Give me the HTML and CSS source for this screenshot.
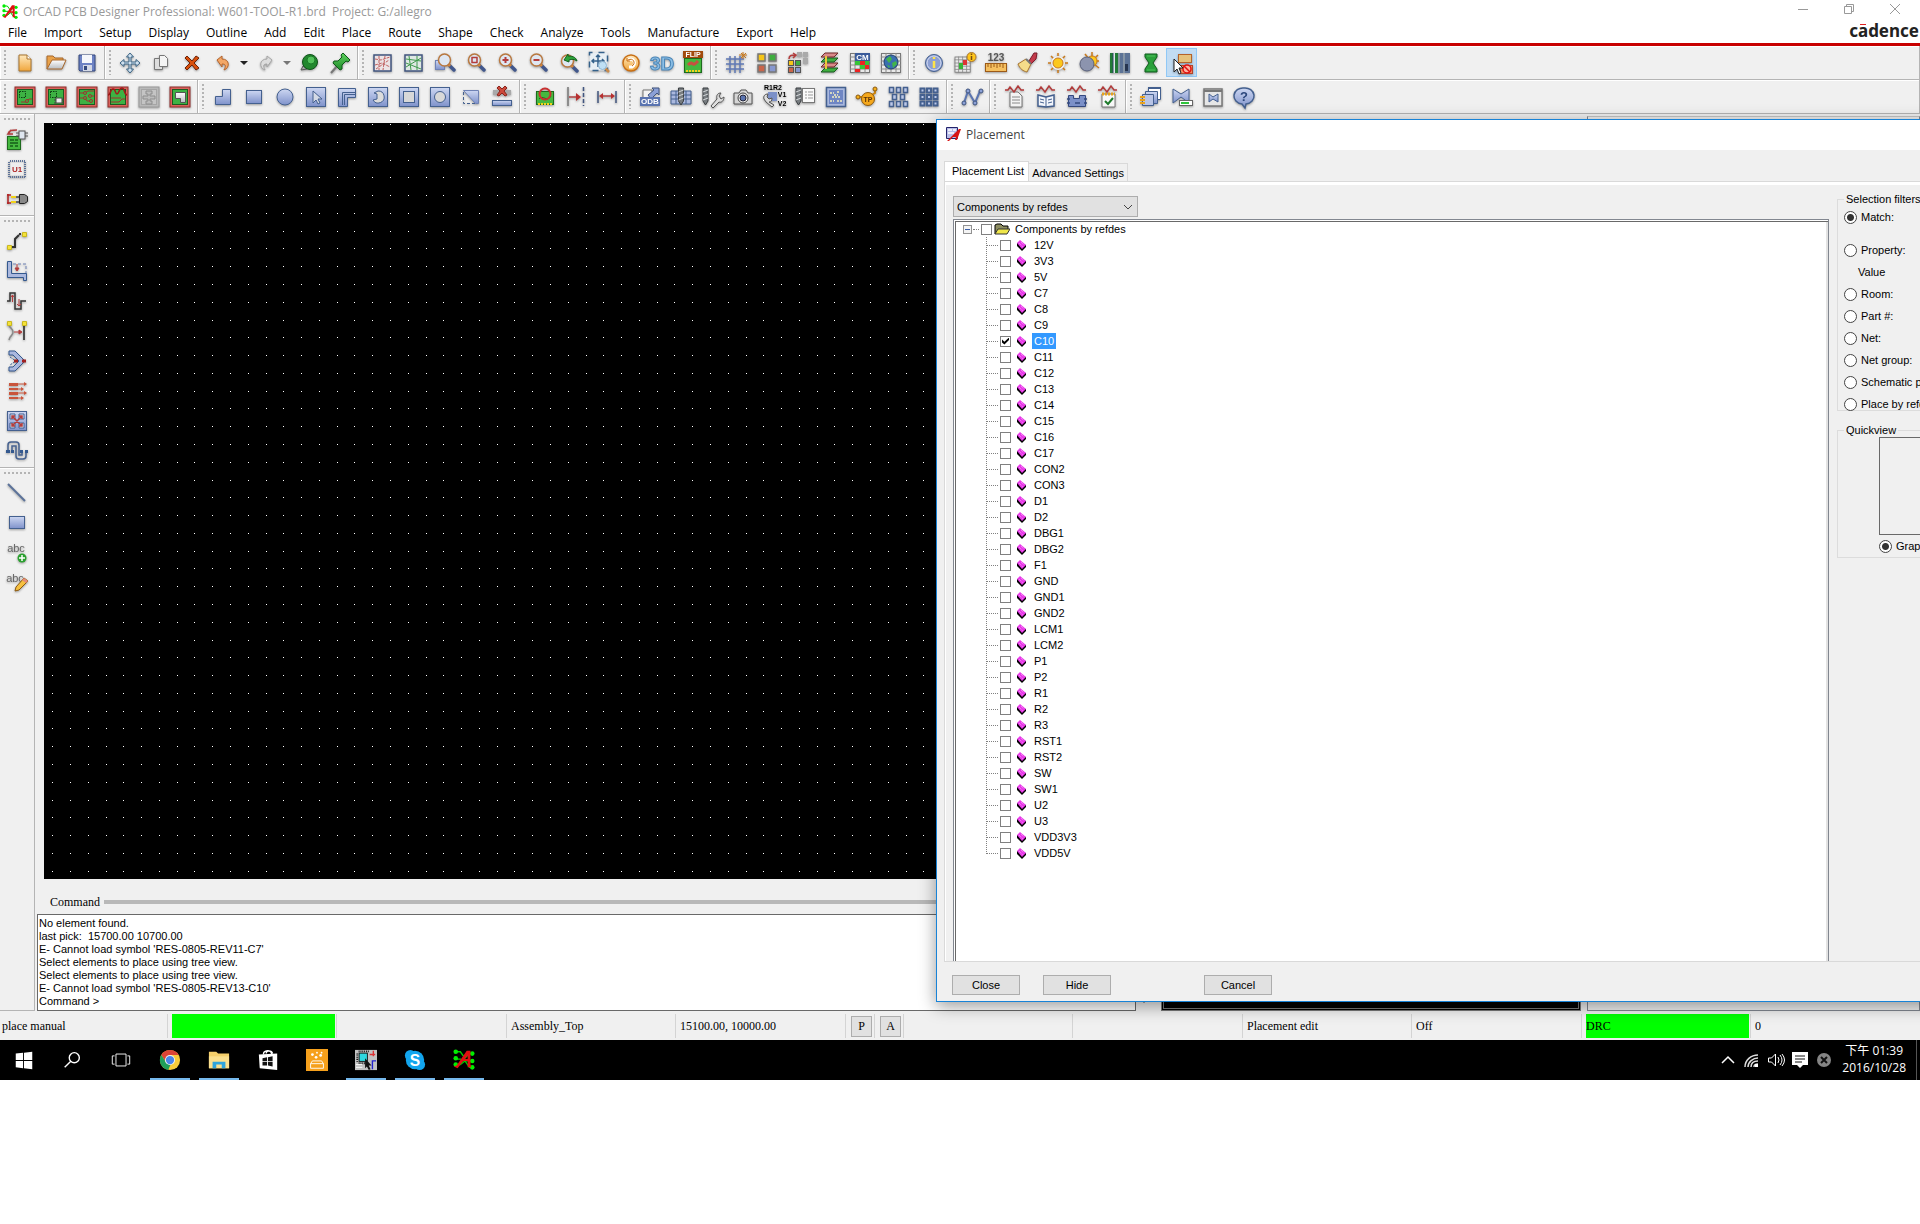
FILE: index.html
```html
<!DOCTYPE html>
<html lang="en">
<head>
    <meta charset="UTF-8">
    <meta name="viewport" content="width=device-width, initial-scale=1.0">
    <title>OrCAD PCB Designer Professional</title>
    <link rel="stylesheet" href="styles.css">
</head>
<body>
<!-- Shared gradients and symbols -->
<svg class="defs" aria-hidden="true">
    <defs>
        <linearGradient id="blue" x1="0" y1="0" x2="0" y2="1"><stop offset="0" stop-color="#cdd7f2"/><stop offset="1" stop-color="#7f92cb"/></linearGradient>
        <linearGradient id="orange" x1="0" y1="0" x2="0" y2="1"><stop offset="0" stop-color="#ffe9bd"/><stop offset="1" stop-color="#f0a63c"/></linearGradient>
        <linearGradient id="green" x1="0" y1="0" x2="0" y2="1"><stop offset="0" stop-color="#5fd35f"/><stop offset="1" stop-color="#1f8a2a"/></linearGradient>
        <linearGradient id="grey" x1="0" y1="0" x2="0" y2="1"><stop offset="0" stop-color="#ffffff"/><stop offset="1" stop-color="#b9bcc0"/></linearGradient>
    </defs>
    <symbol id="board" viewBox="0 0 24 24"><rect x="2" y="2" width="20" height="20" fill="#d9625c" stroke="#8f2d2a"/><rect x="4.500" y="4.500" width="15" height="15" fill="#3db243" stroke="#1c5a20"/></symbol>
    <symbol id="square" viewBox="0 0 24 24"><rect x="2.500" y="2.500" width="19" height="19" fill="url(#blue)" stroke="#44608f"/></symbol>
    <symbol id="lens" viewBox="0 0 24 24"><path d="M15 14l5 5" stroke="#41578c" stroke-width="3.500" stroke-linecap="round"/><path d="M14 13l2 2" stroke="#d98a3a" stroke-width="3"/><circle cx="10.500" cy="9" r="6" fill="#dfe7f2" stroke="#b9783f" stroke-width="1.500"/></symbol>
    <symbol id="wave" viewBox="0 0 24 24"><path d="M2 6h3l2-3 4 5 4-6 3 4h3" fill="none" stroke="#b13a3a" stroke-width="1.500"/></symbol>
    <symbol id="drill" viewBox="0 0 24 24"><path d="M4 2h5v13l-2.500 4L4 15z" fill="#777c80" stroke="#3b3f42"/><path d="M4 6l5-2M4 10l5-2M4 14l5-2" stroke="#d5d8da"/></symbol>
    <symbol id="table" viewBox="0 0 24 24"><rect x="2.500" y="2.500" width="19" height="19" fill="#e8e8e8" stroke="#777"/><path d="M2 6h20M2 10h20M2 14h20M2 18h20M7 2v20M12 2v20M17 2v20" stroke="#888"/></symbol>
    <symbol id="allegro" viewBox="0 0 24 24"><g fill="none" stroke="#0c0" stroke-width="1.500"><path d="M3 3h5l5 7 5-5h4M3 11h6M3 17h5l5-4 5 7h4M14 13h8"/></g><g fill="#0e0"><circle cx="3" cy="3" r="2.500"/><circle cx="3" cy="10" r="2.500"/><circle cx="3" cy="17" r="2.500"/><circle cx="21" cy="5" r="2.500"/><circle cx="21" cy="13" r="2.500"/><circle cx="21" cy="20" r="2.500"/></g><path d="M1 19l4 2L16 7v4h-5v2h5v7h4l-1-3V2h-4L4 18z" fill="#e01010"/></symbol>
    <symbol id="chip" viewBox="0 0 12 12"><path d="M1 4v3l5 5 4-4V6z" fill="#000"/><path d="M1 4l3-3 6 5-4 4z" fill="#e838e8"/><path d="M3 4l4 4M5 3l3 3" stroke="#f8a0f8" stroke-dasharray="1 1"/></symbol>
</svg>

<div class="desktop">
    <header>
        <div class="titlebar">
            <svg class="app-icon" viewBox="0 0 24 24"><use href="#allegro"/></svg>
            <h1>OrCAD PCB Designer Professional: W601-TOOL-R1.brd&nbsp; Project: G:/allegro</h1>
            <div class="window-controls">
                <button aria-label="Minimize"><svg viewBox="0 0 12 12"><path d="M1 6.500h10"/></svg></button>
                <button aria-label="Restore"><svg viewBox="0 0 12 12"><path d="M1.500 3.500h7v7h-7zM3.500 3V1.500h7v7H9"/></svg></button>
                <button aria-label="Close window"><svg viewBox="0 0 12 12"><path d="M1 1l10 10M11 1L1 11"/></svg></button>
            </div>
        </div>
        <div class="menu-row">
            <nav>
                <button>File</button><button>Import</button><button>Setup</button><button>Display</button><button>Outline</button><button>Add</button><button>Edit</button><button>Place</button><button>Route</button><button>Shape</button><button>Check</button><button>Analyze</button><button>Tools</button><button>Manufacture</button><button>Export</button><button>Help</button>
            </nav>
            <div class="brand">c<span class="macron">a</span>dence</div>
        </div>
    </header>

    <!-- Main toolbars -->
    <div class="toolbar">
        <div class="group">
            <button aria-label="New"><svg viewBox="0 0 24 24"><path d="M6 4h8l4 4v12H6z" fill="url(#orange)" stroke="#a8742f"/><path d="M14 4v4h4" fill="#fff" stroke="#a8742f"/></svg></button>
            <button aria-label="Open"><svg viewBox="0 0 24 24"><path d="M3 18V5h6l2 2h8v3" fill="#e9a24a" stroke="#a8682c"/><path d="M3 18L8 9h14l-4 9z" fill="url(#grey)" stroke="#a8682c"/></svg></button>
            <button aria-label="Save"><svg viewBox="0 0 24 24"><path d="M4 4h16v16H5l-1-1z" fill="#6d82c4" stroke="#34497f"/><path d="M7 4h10v8H7z" fill="#f4f6fb"/><path d="M8 14h9v6H8z" fill="#d4d9e6"/><path d="M9 15h3v4H9z" fill="#34497f"/></svg></button>
        </div>
        <div class="group">
            <button aria-label="Move"><svg viewBox="0 0 24 24"><path d="M12 2l3.500 4H13v5h5V8.500l4 3.500-4 3.500V13h-5v5h2.500L12 22l-3.500-4H11v-5H6v2.500L2 12l4-3.500V11h5V6H8.500z" fill="#cfe0ee" stroke="#3b6485"/></svg></button>
            <button aria-label="Copy"><svg viewBox="0 0 24 24"><path d="M5.500 7.500h8v11h-8z" fill="#ddd" stroke="#777"/><path d="M10.500 4.500h5l3 3v8h-8z" fill="#f4f4f4" stroke="#777"/></svg></button>
            <button aria-label="Delete"><svg viewBox="0 0 24 24"><path d="M5 7l2-2 5 5 4-5 3 2-5 5 5 5-3 2-4-5-5 5-2-2 5-5z" fill="#d9500c" stroke="#6e2206"/></svg></button>
            <button aria-label="Undo"><svg viewBox="0 0 24 24"><path d="M6 9l5-4v3c8 0 8 9 2 11 2-4 2-6-2-6v3z" fill="#f3a766" stroke="#b5632a"/></svg></button>
            <button class="drop" aria-label="Undo list"><svg viewBox="0 0 12 12"><path d="M2 4h8L6 8z" fill="#222"/></svg></button>
            <button aria-label="Redo"><svg viewBox="0 0 24 24"><path d="M18 9l-5-4v3c-8 0-8 9-2 11-2-4-2-6 2-6v3z" fill="#ddd" stroke="#a5a5a5"/></svg></button>
            <button class="drop" aria-label="Redo list"><svg viewBox="0 0 12 12"><path d="M2 4h8L6 8z" fill="#777"/></svg></button>
            <button aria-label="Pin on"><svg viewBox="0 0 24 24"><path d="M6 15l-2 4 6-1z" fill="#aaa" stroke="#555"/><circle cx="13" cy="11" r="7.500" fill="#22882e" stroke="#0e5218"/><circle cx="14" cy="9" r="4" fill="#53c25b" stroke="#1b7a27"/></svg></button>
            <button aria-label="Pin"><svg viewBox="0 0 24 24"><path d="M10 14l-7 8" stroke="#777" stroke-width="2"/><path d="M15 2l7 7-2 2-2-1-4 4v4l-2 1-7-7 1-2h4l4-4-1-2z" fill="url(#green)" stroke="#0e5a18"/></svg></button>
        </div>
        <div class="group">
            <button aria-label="Unrats all"><svg viewBox="0 0 24 24"><rect x="3" y="4" width="17" height="16" fill="#ece4e6" stroke="#41557f" stroke-width="1.500"/><path d="M4 8l6 1 9-3M4 14l7-2 8 4M8 5v14M14 5l-2 14M5 18L18 9" stroke="#c06060" stroke-dasharray="3 1"/></svg></button>
            <button aria-label="Rats all"><svg viewBox="0 0 24 24"><rect x="3" y="4" width="17" height="16" fill="#dfe8e4" stroke="#41557f" stroke-width="1.500"/><path d="M4 8l15 2M4 16L19 7M7 5l2 14M15 5v14M4 12l15 6" stroke="#3f9a4c"/></svg></button>
            <button aria-label="Zoom points"><svg viewBox="0 0 24 24"><rect x="2.500" y="9.500" width="9" height="9" fill="url(#blue)" stroke="#6f82b5"/><use href="#lens" x="1"/></svg></button>
            <button aria-label="Zoom fit"><svg viewBox="0 0 24 24"><use href="#lens"/><path d="M8 6.500h5v5H8z" fill="none" stroke="#b33c3c" stroke-width="1.500"/></svg></button>
            <button aria-label="Zoom in"><svg viewBox="0 0 24 24"><use href="#lens"/><path d="M7.500 9h6M10.500 6v6" stroke="#b33c3c" stroke-width="2"/></svg></button>
            <button aria-label="Zoom out"><svg viewBox="0 0 24 24"><use href="#lens"/><path d="M7.500 9h6" stroke="#b33c3c" stroke-width="2"/></svg></button>
            <button aria-label="Zoom previous"><svg viewBox="0 0 24 24"><use href="#lens" y="1"/><path d="M7 9l4-6v2c6 0 8 2 9 5-3-2-5-2-8-1v2z" fill="#2da33a" stroke="#13601c"/></svg></button>
            <button aria-label="Zoom selection"><svg viewBox="0 0 24 24"><path d="M1.500 1.500h18v18h-18z" fill="#e8eff4" stroke="#34618a" stroke-width="1.500" stroke-dasharray="6 6" stroke-dashoffset="3"/><path d="M10 4v12M4 10h12M8 6l2-2 2 2M6 8l-2 2 2 2M14 8l2 2-2 2" fill="none" stroke="#34618a" stroke-width="1.500"/><path d="M17 17l4 4" stroke="#c98a4a" stroke-width="2.500"/><circle cx="14.500" cy="14.500" r="4" fill="#bfe0f5" stroke="#8fb4cf"/></svg></button>
            <button aria-label="Redraw"><svg viewBox="0 0 24 24"><circle cx="12" cy="12" r="8" fill="url(#orange)" stroke="#c96f14" stroke-width="1.500"/><path d="M9 9c6-3 9 4 4 7h-3" fill="none" stroke="#fff" stroke-width="3"/><path d="M9 9c6-3 8 4 4 6M8 7v3h3" fill="none" stroke="#c96f14"/></svg></button>
            <button aria-label="3D view"><svg viewBox="0 0 24 24"><text x="0" y="19" class="t-3d">3D</text></svg></button>
            <button aria-label="Flip design"><svg viewBox="0 0 24 24"><path d="M2 0h20v7H2z" fill="#a24a0c"/><text x="12" y="6" class="t-flip">FLIP</text><rect x="3.500" y="7.500" width="17" height="14" fill="#45b83f" stroke="#1d6b1d"/><path d="M7 14c6-6 3 4 10-4" fill="none" stroke="#c85040" stroke-width="3"/><path d="M5 20h14" stroke="#f2d21c" stroke-width="2" stroke-dasharray="2 1"/></svg></button>
        </div>
        <div class="group">
            <button aria-label="Grid toggle"><svg viewBox="0 0 24 24"><path d="M2 8h18M2 13h18M2 18h18M6 5v17M11 5v17M16 5v17" stroke="#6079b5" stroke-width="1.500"/><path d="M19 1v7M15 4h8M17 2l5 5M22 2l-5 5" stroke="#c9791c"/></svg></button>
            <button aria-label="Color"><svg viewBox="0 0 24 24"><g stroke="#777" stroke-width="1.500"><rect x="3" y="3" width="7" height="7" fill="#f5c518"/><rect x="14" y="3" width="7" height="7" fill="#3fae3f"/><rect x="3" y="14" width="7" height="7" fill="#c9654a"/><rect x="14" y="14" width="7" height="7" fill="#8797cf"/></g></svg></button>
            <button aria-label="Color swap"><svg viewBox="0 0 24 24"><path d="M11 1h5v5h-5zM17 1h5v5h-5zM17 7h5v6h-5z" fill="#aaa"/><g stroke="#555"><rect x="2.500" y="9.500" width="5" height="5" fill="#f5c518"/><rect x="9.500" y="9.500" width="5" height="5" fill="#3fae3f"/><rect x="2.500" y="16.500" width="5" height="5" fill="#c9654a"/><rect x="9.500" y="16.500" width="5" height="5" fill="#8797cf"/></g><path d="M3 8c0-4 3-4 6-4M7 2l3 2-3 3" fill="none" stroke="#b33c3c" stroke-width="1.500"/></svg></button>
            <button aria-label="Cross section"><svg viewBox="0 0 24 24"><path d="M8 17h13l-4 4H4z" fill="#3fae3f" stroke="#1a5c22"/><path d="M8 12h13l-4 4H4z" fill="#d98a8a" stroke="#702828"/><path d="M8 7h13l-4 4H4z" fill="#3fae3f" stroke="#1a5c22"/><path d="M8 2h13l-4 4H4z" fill="#d98a8a" stroke="#702828"/><path d="M9 5v13" stroke="#e9c83a" stroke-width="2"/></svg></button>
            <button aria-label="Constraint manager"><svg viewBox="0 0 24 24"><use href="#table"/><path d="M7 10h5v4H7zM12 14h5v4h-5zM17 10h4v4h-4z" fill="#36c436"/><path d="M12 10h5v4h-5zM7 18h5v3H7zM17 14h4v4h-4z" fill="#e22"/><path d="M7 2h15v8H7z" fill="#3a5b9a"/><text x="14.500" y="9" class="t-cm">CM</text></svg></button>
            <button aria-label="Global constraints"><svg viewBox="0 0 24 24"><use href="#table"/><circle cx="12" cy="11" r="7" fill="#3a6fb0" stroke="#20406e"/><path d="M7 8l4-3 2 3-3 4zM13 12l4-2 1 3-4 4zM8 14l3 1-1 2z" fill="#43b54a"/></svg></button>
        </div>
        <div class="group last">
            <button aria-label="Show element"><svg viewBox="0 0 24 24"><circle cx="12" cy="12" r="8.500" fill="#8d9fd2" stroke="#44608f"/><circle cx="12" cy="12" r="7" fill="none" stroke="#d4dcf2"/><path d="M12 10v7M12 6v2" stroke="#ffe34a" stroke-width="2.500"/></svg></button>
            <button aria-label="Property info"><svg viewBox="0 0 24 24"><g transform="translate(0 4) scale(.8)"><use href="#table"/></g><path d="M6 12h4v6H6z" fill="#36b436"/><path d="M10 9h4v5h-4z" fill="#d33"/><circle cx="18.500" cy="6" r="4.500" fill="#ffc61a" stroke="#a8742f"/><path d="M18.500 5v4M18.500 2.500v1.500" stroke="#7a4b10" stroke-width="1.500"/></svg></button>
            <button aria-label="Measure"><svg viewBox="0 0 24 24"><text x="12" y="10" class="t-123">123</text><rect x="1.500" y="12.500" width="21" height="8" fill="#f5c060" stroke="#9c5a18"/><path d="M4 13v3M7 13v4M10 13v3M13 13v4M16 13v3M19 13v4" stroke="#9c5a18"/></svg></button>
            <button aria-label="Highlight"><svg viewBox="0 0 24 24"><path d="M14 10l5-8h3l-1 6-5 5z" fill="#c33a4a" stroke="#7a1c2a"/><path d="M3 13l8-5 5 5-4 8c-4-1-7-3-9-8z" fill="#f5dc8a" stroke="#a8742f"/><path d="M11 8l5 5" stroke="#777" stroke-width="2"/></svg></button>
            <button aria-label="Dehighlight"><svg viewBox="0 0 24 24"><path d="M12 2v20M2 12h20M5 5l14 14M19 5L5 19" stroke="#c97a1c" stroke-width="1.500"/><circle cx="12" cy="12" r="7" fill="#efefef"/><circle cx="12" cy="12" r="5" fill="#fcc81c" stroke="#c97a1c"/></svg></button>
            <button aria-label="Shadow mode"><svg viewBox="0 0 24 24"><path d="M15 1v6M22 10h-5M21 4l-5 5M8 3l4 5M22 17l-5-4" stroke="#c97a1c" stroke-width="1.500"/><circle cx="15" cy="10" r="5" fill="#fcc81c" stroke="#c97a1c"/><circle cx="10" cy="13" r="7" fill="#8c94ae" stroke="#59617c"/></svg></button>
            <button aria-label="Layers"><svg viewBox="0 0 24 24"><path d="M2 2h20v20H2z" fill="#dfe6ea"/><path d="M2 2h3v20H2zM7 2h3v20H7z" fill="#217a36"/><path d="M12 2h3v20h-3zM17 2h5v20h-5z" fill="#5c7396"/><path d="M5 2v20M11 2v20M16 2v20" stroke="#2d4560"/><path d="M17 13h3v7h-3z" fill="#26354f"/></svg></button>
            <button aria-label="Update"><svg viewBox="0 0 24 24"><path d="M6 3h12v3l-4 6 4 6v3H6v-3l4-6-4-6z" fill="#29a03a" stroke="#0f5c1c"/><path d="M8 5h8M8 19h8" stroke="#4fc05a"/></svg></button>
            <button class="on" aria-label="Waive DRC"><svg viewBox="0 0 24 24"><rect x="8.500" y="3.500" width="13" height="8" fill="#e6c27c" stroke="#b5632a"/><rect x="10.500" y="14.500" width="12" height="8" fill="#f08a60" stroke="#b5432a"/><circle cx="17" cy="18" r="4" fill="#ffb0a0" stroke="#e01010" stroke-width="1.500"/><path d="M14 15l6 6" stroke="#e01010" stroke-width="1.500"/><path d="M4 8v13l3-3 2 5 2-1-2-5h4z" fill="#fff" stroke="#222"/></svg></button>
        </div>
    </div>
    <div class="toolbar">
        <div class="group">
            <button aria-label="General edit"><svg viewBox="0 0 24 24"><use href="#board"/><rect x="6.500" y="6.500" width="6" height="6" fill="none" stroke="#0d3d12" stroke-dasharray="1.500 1"/><path d="M8 17h5l3-3h3" fill="none" stroke="#a03030"/><circle cx="14" cy="16" r="1.500" fill="#3db243" stroke="#a03030"/></svg></button>
            <button aria-label="Placement edit"><svg viewBox="0 0 24 24"><use href="#board"/><rect x="6.500" y="6.500" width="6" height="6" fill="none" stroke="#0d3d12" stroke-dasharray="1.500 1"/><rect x="12" y="13" width="6" height="5" fill="#eee" stroke="#444"/><path d="M10 15h2M18 15h2M10 18h2M18 18h2" stroke="#444"/></svg></button>
            <button aria-label="Etch edit"><svg viewBox="0 0 24 24"><use href="#board"/><path d="M5 8h5l3-2h6M5 13h5l2 3h3M13 11h6" fill="none" stroke="#a03030"/><g fill="#3db243" stroke="#a03030"><circle cx="10" cy="8" r="1.500"/><circle cx="10" cy="13" r="1.500"/><circle cx="15" cy="11" r="1.500"/><circle cx="16" cy="16" r="1.500"/></g></svg></button>
            <button aria-label="Signal integrity"><svg viewBox="0 0 24 24"><use href="#board"/><path d="M2 10c3 0 2-6 5-6s2 5 4 5 2-6 5-6 2 7 5 7" fill="none" stroke="#a01818" stroke-width="1.500"/><path d="M5 13h10M5 17h8l3-3h3" stroke="#a03030" fill="none"/></svg></button>
            <button aria-label="RF edit"><svg viewBox="0 0 24 24"><rect x="2" y="2" width="20" height="20" fill="#b9b9b9" stroke="#999"/><rect x="4.500" y="4.500" width="15" height="15" fill="#c4c4c4" stroke="#a5a5a5"/><path d="M9 6h6v3h-2v2h5v3h-5v2h2v3H9v-3h2v-2H6v-3h5V9H9z" fill="#bbb" stroke="#8d8d8d"/></svg></button>
            <button aria-label="Shape edit"><svg viewBox="0 0 24 24"><use href="#board"/><path d="M7.500 7.500h10v10h-5v-4h-5z" fill="url(#grey)" stroke="#555"/></svg></button>
        </div>
        <div class="group">
            <button aria-label="Shape polygon"><svg viewBox="0 0 24 24"><path d="M4.500 19.500v-8h7v-7h8v15z" fill="url(#blue)" stroke="#44608f"/></svg></button>
            <button aria-label="Shape rectangle"><svg viewBox="0 0 24 24"><rect x="4.500" y="5.500" width="15" height="13" fill="url(#blue)" stroke="#44608f"/></svg></button>
            <button aria-label="Shape circle"><svg viewBox="0 0 24 24"><circle cx="12" cy="12" r="8" fill="url(#blue)" stroke="#44608f"/></svg></button>
            <button aria-label="Shape select"><svg viewBox="0 0 24 24"><use href="#square"/><path d="M9 6v12l3-3 2 4 2-1-2-4h4z" fill="#d5dbe6" stroke="#44608f"/></svg></button>
            <button aria-label="Shape void element"><svg viewBox="0 0 24 24"><path d="M3.500 3.500h17v9h-8v9h-9z" fill="url(#blue)" stroke="#44608f"/><path d="M7.500 20V7.500H20M9.500 20V9.500H20" fill="none" stroke="#44608f"/></svg></button>
            <button aria-label="Void polygon"><svg viewBox="0 0 24 24"><use href="#square"/><path d="M12 6a6 6 0 1 1-5 9l4-1V9L8 8z" fill="#dcdcdc" stroke="#44608f"/></svg></button>
            <button aria-label="Void rectangle"><svg viewBox="0 0 24 24"><use href="#square"/><rect x="6.500" y="6.500" width="11" height="11" fill="#d8d8d8" stroke="#44608f"/></svg></button>
            <button aria-label="Void circle"><svg viewBox="0 0 24 24"><use href="#square"/><circle cx="12" cy="12" r="5.500" fill="#d8d8d8" stroke="#44608f"/></svg></button>
            <button aria-label="Edit boundary"><svg viewBox="0 0 24 24"><path d="M4.500 5.500h15v13h-3z" fill="url(#blue)" stroke="#6f82b5"/><path d="M4.500 7v11.500h12" fill="none" stroke="#44608f" stroke-dasharray="3 2"/></svg></button>
            <button aria-label="Delete islands"><svg viewBox="0 0 24 24"><path d="M3 5h18v5H3z" fill="#a9a9a9"/><path d="M7 3l2-2 3 3 3-3 2 2-3 3 3 4-2 1-3-3-3 3-2-1 3-4z" fill="#cc4a3c" stroke="#8c241c"/><rect x="2.500" y="15.500" width="19" height="5" fill="url(#blue)" stroke="#44608f"/></svg></button>
        </div>
        <div class="group">
            <button aria-label="Board check"><svg viewBox="0 0 24 24"><rect x="3.500" y="6.500" width="17" height="13" fill="#45b83f" stroke="#1d6b1d"/><path d="M5 19h14" stroke="#f2d21c" stroke-width="2" stroke-dasharray="2 1"/><path d="M6 14c4-5 8 4 12-3" stroke="#1d6b1d" fill="none"/><circle cx="12" cy="9" r="5.500" fill="none" stroke="#c93030" stroke-width="2"/></svg></button>
            <button aria-label="Dimension edge"><svg viewBox="0 0 24 24"><path d="M4 2v19" stroke="#777" stroke-width="1.500"/><path d="M19.500 2v19" stroke="#41557f" stroke-width="1.500" stroke-dasharray="4 2"/><path d="M5 12h9" stroke="#b04040" stroke-width="1.500"/><path d="M12 8l5 4-5 4z" fill="#b83030"/></svg></button>
            <button aria-label="Linear dimension"><svg viewBox="0 0 24 24"><path d="M3 6v12M21 6v12" stroke="#41557f" stroke-width="1.500"/><path d="M6 11h12" stroke="#b04040" stroke-width="1.500"/><path d="M8 8l-4 3 4 3zM16 8l4 3-4 3z" fill="#b83030"/></svg></button>
        </div>
        <div class="group">
            <button aria-label="ODB export"><svg viewBox="0 0 24 24"><path d="M5 20V5h9v15" fill="#f3f3f3" stroke="#777"/><path d="M10 10l6-5-2-2h7v7l-2-2-6 6z" fill="#8ba0d6" stroke="#41557f"/><path d="M2 12h20v9H2z" fill="#5a74b0"/><text x="12" y="19" class="t-odb">ODB</text></svg></button>
            <button aria-label="NC drill"><svg viewBox="0 0 24 24"><path d="M2 6h20v13H2z" fill="#aab8de" stroke="#44608f"/><path d="M2 10h20M2 14h20M7 6v13M17 6v13" stroke="#44608f"/><use href="#drill" x="5.500" y="1"/></svg></button>
            <button aria-label="NC parameters"><svg viewBox="0 0 24 24"><use href="#drill" y="1" x="-1"/><path d="M11 21l6-7c-1-4 1-6 4-6l-2 3 2 3 3-2c0 4-3 6-5 5l-6 6z" fill="#ddd" stroke="#555"/></svg></button>
            <button aria-label="Photoplot"><svg viewBox="0 0 24 24"><path d="M3 8h5l2-3h5l2 3h4v11H3z" fill="#d6d6d6" stroke="#555"/><circle cx="12" cy="13" r="5" fill="#eee" stroke="#444"/><circle cx="12" cy="13" r="3" fill="#5a74b0" stroke="#223"/></svg></button>
            <button aria-label="Rename refdes"><svg viewBox="0 0 24 24"><text x="11" y="5" class="t-ref">R1R2</text><text x="20" y="12" class="t-ref">V1</text><text x="20" y="21" class="t-ref">V2</text><path d="M6 7h9v9H6z" fill="#7b90c8"/><path d="M2 14c-1-3 1-5 4-5l-1 3 2 2 3-1c0 3-1 4-3 4l5 3-2 2-6-5z" fill="#ddd" stroke="#555"/></svg></button>
            <button aria-label="Drill legend"><svg viewBox="0 0 24 24"><rect x="9.500" y="3.500" width="12" height="14" fill="#fafafa" stroke="#777"/><path d="M12 7h2M15 7h5M12 10h2M15 10h5M12 13h2M15 13h5" stroke="#999"/><use href="#drill" x="-1" y="1"/></svg></button>
            <button aria-label="Silkscreen"><svg viewBox="0 0 24 24"><rect x="2.500" y="2.500" width="19" height="19" fill="#a9b8de" stroke="#44608f" stroke-width="1.500"/><path d="M5 5h14v14H5z" fill="#6f86c4"/><path d="M6 8h4M13 7h3M8 12h9M6 16h4M13 16h5M10 10h4" stroke="#f5f0c0" stroke-width="1.500" stroke-dasharray="2 1"/></svg></button>
            <button aria-label="Testprep"><svg viewBox="0 0 24 24"><path d="M2 12h7M15 11l5-3V3" stroke="#c98410" stroke-width="2" fill="none"/><circle cx="3" cy="12" r="2" fill="#f5b01c" stroke="#8c5a10"/><circle cx="20" cy="4" r="2" fill="#f5b01c" stroke="#8c5a10"/><circle cx="13" cy="14" r="6.500" fill="#f5a81c" stroke="#8c5a10"/><text x="13" y="17" class="t-tp">TP</text></svg></button>
            <button aria-label="Panel matrix"><svg viewBox="0 0 24 24"><g fill="#bcc8e8" stroke="#44608f" stroke-width="1.500"><path d="M3.500 2.500h4v5h-4zM10.500 2.500h4v5h-4zM17.500 2.500h4v5h-4zM6.500 9.500h4v5h-4zM14.500 9.500h4v5h-4zM3.500 16.500h4v5h-4zM10.500 16.500h4v5h-4zM17.500 16.500h4v5h-4z"/></g></svg></button>
            <button aria-label="Pin matrix"><svg viewBox="0 0 24 24"><g fill="#bcc8e8" stroke="#44608f" stroke-width="2"><path d="M3.500 3.500h4v4h-4zM10 3.500h4v4h-4zM16.500 3.500h4v4h-4zM3.500 10h4v4h-4zM10 10h4v4h-4zM16.500 10h4v4h-4zM3.500 16.500h4v4h-4zM10 16.500h4v4h-4zM16.500 16.500h4v4h-4z"/></g></svg></button>
        </div>
        <div class="group">
            <button aria-label="Net schedule"><svg viewBox="0 0 24 24"><path d="M4 18L8 6l7 12 5-12" fill="none" stroke="#5a74b0" stroke-width="2"/><g fill="#8ba0d6" stroke="#41557f"><circle cx="4" cy="18" r="2"/><circle cx="8" cy="6" r="2"/><circle cx="15" cy="18" r="2"/><circle cx="21" cy="6" r="2"/></g></svg></button>
        </div>
        <div class="group">
            <button aria-label="Signal report"><svg viewBox="0 0 24 24"><path d="M7 7h8l4 4v11H7z" fill="#f3f3f3" stroke="#777"/><path d="M9 12h8M9 15h8M9 18h8" stroke="#888"/><use href="#wave" y="-1"/></svg></button>
            <button aria-label="Signal library"><svg viewBox="0 0 24 24"><path d="M4 10l8 2 8-2v11l-8 1-8-1z" fill="#f3f6fc" stroke="#44608f" stroke-width="1.500"/><path d="M12 12v10M6 14l4 1M6 17l4 1M14 15l4-1M14 18l4-1" stroke="#44608f"/><use href="#wave" y="-1"/></svg></button>
            <button aria-label="Signal model"><svg viewBox="0 0 24 24"><path d="M3.500 10.500h5v3h6v-3h6v11h-17z" fill="#7b90c8" stroke="#34497f"/><path d="M2 14h3M2 18h3M19 14h3M19 18h3M10 18h5" stroke="#34497f" stroke-width="1.500"/><use href="#wave" y="-1"/></svg></button>
            <button aria-label="Signal audit"><svg viewBox="0 0 24 24"><path d="M6 9h13v13H6z" fill="#f8f8f8" stroke="#777"/><path d="M6 9h13" stroke="#e8a21c" stroke-width="3" stroke-dasharray="2 1"/><path d="M9 16l3 3 5-6" fill="none" stroke="#1d7a2a" stroke-width="2"/><use href="#wave" y="-1"/></svg></button>
        </div>
        <div class="group last">
            <button aria-label="Reports"><svg viewBox="0 0 24 24"><path d="M9.500 2.500h12v12h-12z" fill="#fff" stroke="#44608f"/><path d="M9 3h13" stroke="#44608f" stroke-width="2"/><path d="M6.500 6.500h12v12h-12z" fill="url(#blue)" stroke="#44608f"/><path d="M3.500 9.500h11v11h-11z" fill="#b9c5e6" stroke="#44608f"/><path d="M1 12h5M1 15h5M1 18h5" stroke="#e8a21c" stroke-width="2"/></svg></button>
            <button aria-label="DRC status"><svg viewBox="0 0 24 24"><path d="M3 4l8 5 8-5v14l-8-6-8 6z" fill="url(#blue)" stroke="#44608f"/><rect x="9.500" y="15.500" width="13" height="5" fill="#fff" stroke="#666"/><path d="M11 18h8" stroke="#2fc43a" stroke-width="2"/></svg></button>
            <button aria-label="DRC browser"><svg viewBox="0 0 24 24"><rect x="3" y="4" width="18" height="17" fill="#e6e6e6" stroke="#777" stroke-width="1.500"/><path d="M3 6h18" stroke="#777" stroke-width="2"/><path d="M8 9l4 3 5-3v8l-5-3-4 3z" fill="url(#blue)" stroke="#44608f"/></svg></button>
            <button aria-label="Help contents"><svg viewBox="0 0 24 24"><path d="M12 3a9 8 0 0 1 2 16l-1 4-3-4A9 8 0 0 1 12 3z" fill="url(#blue)" stroke="#44608f" stroke-width="1.500"/><text x="12" y="16" class="t-help">?</text></svg></button>
        </div>
    </div>

    <main>
        <div class="side-toolbar">
            <div class="group">
                <button aria-label="Place manual"><svg viewBox="0 0 24 24"><rect x="2.500" y="9.500" width="13" height="13" fill="#45b83f" stroke="#1d6b1d"/><path d="M5 13h4M5 16h8M5 19h3M10 13h3M10 19h3" stroke="#155c1a" stroke-width="1.500"/><rect x="14" y="4" width="6" height="8" fill="#dfe6ef" stroke="#555"/><path d="M11 6h3M11 9h3M20 6h3M20 9h3" stroke="#555"/><path d="M3 7c1-4 4-4 9-4M6 3L3 7h5" stroke="#b33c3c" stroke-width="1.500" fill="none"/></svg></button>
                <button aria-label="Place refdes"><svg viewBox="0 0 24 24"><rect x="5" y="5" width="14" height="14" fill="#eee" stroke="#ccc"/><path d="M5 4h15M5 20h15M4 5v15M20 5v15" stroke="#5c7299" stroke-width="2" stroke-dasharray="1 1"/><text x="12" y="15" class="t-u1">U1</text></svg></button>
                <button aria-label="Swap"><svg viewBox="0 0 24 24"><path d="M3 7v10M2 8h4M2 16h4" stroke="#b02020" stroke-width="1.500"/><path d="M6 9h5v2H6zM6 14h5v2H6z" fill="#f2d21c"/><path d="M11 10h4M11 15h4" stroke="#444" stroke-width="1.500"/><path d="M14.500 7.500h5l3 2v5l-3 2h-5z" fill="#888" stroke="#222"/></svg></button>
            </div>
            <div class="group">
                <button aria-label="Add connect"><svg viewBox="0 0 24 24"><path d="M5 18h5v-8l4-4" fill="none" stroke="#333" stroke-width="2"/><path d="M14 5h5" stroke="#333" stroke-width="2" stroke-dasharray="2 1"/><path d="M2.500 16.500h4v4h-4zM17.500 3.500h4v4h-4z" fill="#f5e23a" stroke="#c9b820"/></svg></button>
                <button aria-label="Slide"><svg viewBox="0 0 24 24"><path d="M8 5h13v10" fill="none" stroke="#6f82b5" stroke-dasharray="3 2"/><path d="M2.500 2.500h4v12h15v7h-3v-3h-16z" fill="#aab8de" stroke="#34598f"/><path d="M12 5v7M10 9h4l-2 3z" fill="#b33c3c" stroke="#b33c3c"/></svg></button>
                <button aria-label="Delay tune"><svg viewBox="0 0 24 24"><path d="M2 12h3V4h5v16h6v-8h5" fill="none" stroke="#333" stroke-width="1.500"/><path d="M7.500 13V6M6 8l1.500-2L9 8M14 10v7M12 15l2 2 2-2" stroke="#b33c3c" fill="none"/></svg></button>
                <button aria-label="Custom smooth"><svg viewBox="0 0 24 24"><path d="M4 6c1 4 4 3 4 7s-3 3-4 8" fill="none" stroke="#888" stroke-width="1.500"/><path d="M19 6v15" stroke="#222" stroke-width="1.500"/><path d="M9 13h5M14 11l3 2-3 2z" stroke="#b33c3c" fill="#b33c3c"/><path d="M2.500 2.500h4v4h-4zM17.500 2.500h4v4h-4z" fill="#f5e23a" stroke="#c9b820"/></svg></button>
                <button aria-label="Vertex"><svg viewBox="0 0 24 24"><path d="M4 2h6l10 10-10 10H4v-4h4l6-6-6-6H4z" fill="#aab8de" stroke="#34598f"/><path d="M5 8l6 4-6 4" stroke="#34598f" fill="none" stroke-dasharray="2 1"/><path d="M9 12h4M17 12h4" stroke="#a02020" stroke-width="3"/></svg></button>
                <button aria-label="Fanout"><svg viewBox="0 0 24 24"><path d="M4 4h9v3H4zM4 9h9v2H4zM4 13h9v3H4zM4 18h9v2H4z" fill="#c9553c"/><path d="M12 5h9M12 10h6M12 14h9M12 19h6" stroke="#c9553c"/><path d="M19 3l3 2-3 2zM16 8l3 2-3 2zM19 12l3 2-3 2zM16 17l3 2-3 2z" fill="#c9553c"/></svg></button>
                <button aria-label="Spread"><svg viewBox="0 0 24 24"><use href="#square"/><path d="M5 5h5v5H5zM14 5h5v5h-5zM5 14h5v5H5zM14 14h5v5h-5z" fill="#dfe6f5" stroke="#44608f"/><path d="M7 7l10 10M17 7L7 17M7 10V7h3M14 7h3v3M7 14v3h3M14 17h3v-3" stroke="#b33c3c" stroke-width="1.500" fill="none"/></svg></button>
                <button aria-label="Phase tune"><svg viewBox="0 0 24 24"><path d="M3 12V6q0-3 3-3h5q3 0 3 3v10h3v-4M7 12V7h4v10q0 3 3 3h4q3 0 3-3v-5" fill="none" stroke="#44608f" stroke-width="1.500"/><path d="M1 11h4v3H1zM6 11h3v3H6zM15 11h3v3h-3zM20 11h3v3h-3z" fill="#34598f"/></svg></button>
            </div>
            <div class="group last">
                <button aria-label="Add line"><svg viewBox="0 0 24 24"><path d="M3 3l17 17" stroke="#5c7299" stroke-width="2"/></svg></button>
                <button aria-label="Add rectangle"><svg viewBox="0 0 24 24"><rect x="4.500" y="5.500" width="15" height="12" fill="url(#blue)" stroke="#44608f"/></svg></button>
                <button aria-label="Add text"><svg viewBox="0 0 24 24"><text x="11" y="11" class="t-abc">abc</text><circle cx="17" cy="17" r="4.500" fill="#2ba02f"/><path d="M14 17h6M17 14v6" stroke="#fff" stroke-width="1.500"/></svg></button>
                <button aria-label="Edit text"><svg viewBox="0 0 24 24"><text x="10" y="11" class="t-abc">abc</text><path d="M10 20l1-4 8-9 4 3-9 9z" fill="#f5c040" stroke="#8c5a10"/><path d="M19 7l4 3-2 2-4-3z" fill="#e58a7a"/></svg></button>
            </div>
        </div>

        <section class="editor">
            <svg class="canvas" aria-label="Design canvas">
                <defs>
                    <g id="dots" fill="#fff"><rect width="1" height="1"/><rect x="18" width="1" height="1"/><rect x="36" width="1" height="1"/><rect x="54" width="1" height="1"/><rect x="71" width="1" height="1"/><rect x="89" width="1" height="1"/><rect x="107" width="1" height="1"/><rect x="125" width="1" height="1"/><rect x="142" width="1" height="1"/></g>
                    <pattern id="grid" x="8" y="1" width="160" height="160" patternUnits="userSpaceOnUse">
                        <use href="#dots"/><use href="#dots" y="18"/><use href="#dots" y="36"/><use href="#dots" y="53"/><use href="#dots" y="71"/><use href="#dots" y="89"/><use href="#dots" y="107"/><use href="#dots" y="124"/><use href="#dots" y="142"/>
                    </pattern>
                </defs>
                <rect width="100%" height="100%" fill="url(#grid)"/>
            </svg>
            <h2 class="command-title">Command</h2>
            <div class="console-row">
<pre class="console">No element found.
last pick:  15700.00 10700.00
E- Cannot load symbol 'RES-0805-REV11-C7'
Select elements to place using tree view.
Select elements to place using tree view.
E- Cannot load symbol 'RES-0805-REV13-C10'
Command &gt;</pre>
                <div class="scroll"><svg viewBox="0 0 12 12"><path d="M2 5h8L6 10z" fill="#444"/></svg></div>
                <div class="worldview"></div>
            </div>
        </section>
        <aside class="options"></aside>
    </main>

    <footer class="statusbar">
        <div class="cell first">place manual</div>
        <div class="cell"><span class="light"></span></div>
        <div class="cell wide"></div>
        <div class="cell">Assembly_Top</div>
        <div class="cell wide">15100.00, 10000.00</div>
        <div class="cell key"><button>P</button></div>
        <div class="cell key"><button>A</button></div>
        <div class="cell"></div>
        <div class="cell wide"></div>
        <div class="cell">Placement edit</div>
        <div class="cell wide">Off</div>
        <div class="cell"><span class="light">DRC</span></div>
        <div class="cell rest">0</div>
    </footer>

    <!-- Windows taskbar -->
    <div class="taskbar">
        <button class="sys" aria-label="Start"><svg viewBox="0 0 24 24"><path d="M3 5l8-1v8H3zM12 4l9-1v9h-9zM3 13h8v8l-8-1zM12 13h9v9l-9-1z" fill="#fff"/></svg></button>
        <button class="sys" aria-label="Search"><svg viewBox="0 0 24 24"><circle cx="14.500" cy="9.500" r="5.500" fill="none" stroke="#fff" stroke-width="1.500"/><path d="M11 13l-7 7" stroke="#fff" stroke-width="1.500"/></svg></button>
        <button aria-label="Task view"><svg viewBox="0 0 24 24"><path d="M6.500 5.500h11v13h-11zM5 7.500H2.500v9H5M19 7.500h2.500v9H19" fill="none" stroke="#fff"/></svg></button>
        <button class="open" aria-label="Chrome"><svg viewBox="0 0 24 24"><circle cx="12" cy="12" r="11" fill="#f7cb3a"/><path d="M2.500 6.500A11 11 0 0 1 21.500 6.500H12L8 15z" fill="#db4437"/><path d="M2.500 6.500L8 15l4 2 1-1-3 7A11 11 0 0 1 2.500 6.500z" fill="#1fa05a"/><circle cx="12" cy="12" r="5.500" fill="#f2f2f2"/><circle cx="12" cy="12" r="4.500" fill="#4a86e8"/></svg></button>
        <button class="open" aria-label="File Explorer"><svg viewBox="0 0 24 24"><path d="M1 3h8l2 2h12v16H1z" fill="#f5cf6b"/><path d="M1 8h22v13H1z" fill="#fbe08e"/><path d="M5 21v-7h14v7h-4v-4H9v4z" fill="#2fa4dc"/></svg></button>
        <button aria-label="Store"><svg viewBox="0 0 24 24"><path d="M7 6c0-5 9-6 9 0M10 5c0-4 6-4 7 0" stroke="#fff" fill="none" stroke-width="1.500"/><path d="M2 6l20-1v18L3 21z" fill="#fff"/><path d="M6 10l5-1v4H6zM12 9l5-1v5h-5zM6 14h5v4H6zM12 14h5v5l-5-1z" fill="#111"/></svg></button>
        <button aria-label="Installer"><svg viewBox="0 0 24 24"><rect width="24" height="24" fill="#f6a01c"/><path d="M5 16l2-3h10l2 3v5H5zM5 16h14" fill="none" stroke="#fff"/><g fill="#fff"><circle cx="7" cy="6" r="1.500"/><circle cx="12" cy="4" r="1"/><circle cx="11" cy="9" r="1.500"/><circle cx="16" cy="7" r="1.500"/><circle cx="17" cy="4" r="1"/></g></svg></button>
        <button class="open" aria-label="Capture"><svg viewBox="0 0 24 24"><path d="M0 1h24v22H0z" fill="#c2c2c2"/><rect x="4.500" y="4.500" width="9" height="9" fill="#2fd8e0" stroke="#111"/><path d="M4 2.500h11M4 15.500h9M2.500 5v9" stroke="#111" stroke-width="2" stroke-dasharray="1 1"/><path d="M16 6h6M20 2v6" stroke="#d33" stroke-width="1.500"/><path d="M19 22v-9h4" stroke="#22c" fill="none" stroke-width="1.500"/><path d="M11 10v11l2-2 2 4 2-1-2-4h3z" fill="#111"/><path d="M1 17h7M1 20h7" stroke="#fff"/></svg></button>
        <button class="open" aria-label="Skype"><svg viewBox="0 0 24 24"><circle cx="7" cy="7" r="6" fill="#12a5ee"/><circle cx="17" cy="17" r="6" fill="#12a5ee"/><circle cx="12" cy="12" r="10" fill="#12a5ee"/><text x="12" y="18" class="t-skype">S</text></svg></button>
        <button class="open" aria-label="Allegro"><svg viewBox="0 0 24 24"><use href="#allegro"/></svg></button>
        <div class="tray">
            <svg viewBox="0 0 24 24"><path d="M6 15l6-6 6 6" fill="none" stroke="#fff" stroke-width="1.500"/></svg>
            <svg viewBox="0 0 24 24"><path d="M5 19C5 12 11 7 18 7M8 19c0-5 5-9 10-9M11 19c0-4 3-6 7-6M14 19c0-2 2-3 4-3" fill="none" stroke="#ddd" stroke-width="1.500"/><path d="M15 16h3v3h-3z" fill="#fff"/></svg>
            <svg viewBox="0 0 24 24"><path d="M4.500 10h3l4-4v12l-4-4h-3zM14 9q2 3 0 6M16 7q4 5 0 10M18 6q5 6 0 12" fill="none" stroke="#fff"/></svg>
            <svg viewBox="0 0 24 24"><path d="M4 4h16v13h-5l-3 3-3-3H4z" fill="#fff"/><path d="M7 8h10M7 11h10M7 14h7" stroke="#111"/></svg>
            <svg viewBox="0 0 24 24"><circle cx="12" cy="12" r="7" fill="#858585"/><path d="M9 9l6 6M15 9l-6 6" stroke="#111" stroke-width="2"/></svg>
            <div class="clock">下午 01:39<br>2016/10/28</div>
        </div>
    </div>

    <!-- Placement dialog, runs past the right edge of the screen -->
    <div class="dialog" role="dialog" aria-labelledby="dialog-title">
        <div class="dialog-title">
            <svg viewBox="0 0 16 16"><path d="M1.500 1.500h11v11h-11z" fill="#b7bce8" stroke="#23236b"/><path d="M3 4h4M3 7h6M8 4h3" stroke="#fff" stroke-width="1.500"/><path d="M2 15L14 3h2l-4 11h-2l1-3H8l-4 4z" fill="#d81414"/></svg>
            <h2 id="dialog-title">Placement</h2>
        </div>
        <div class="dialog-body">
            <div class="tabs">
                <button class="active">Placement List</button>
                <button>Advanced Settings</button>
            </div>
            <div class="page">
                <div class="tree-column">
                    <select aria-label="Placement list type"><option>Components by refdes</option></select>
                    <div class="tree">
                        <label class="root"><span class="expander"></span><span class="link"></span><input type="checkbox"><svg class="folder" viewBox="0 0 16 12"><path d="M1 11V2l2-1h4l2 2h5v3" fill="#8c8c60" stroke="#000"/><path d="M1 11l3-5h12l-3 5z" fill="#efe64a" stroke="#333"/></svg>Components by refdes</label>
                        <ul>
                            <li><label><input type="checkbox"><svg><use href="#chip"/></svg><span>12V</span></label></li>
                            <li><label><input type="checkbox"><svg><use href="#chip"/></svg><span>3V3</span></label></li>
                            <li><label><input type="checkbox"><svg><use href="#chip"/></svg><span>5V</span></label></li>
                            <li><label><input type="checkbox"><svg><use href="#chip"/></svg><span>C7</span></label></li>
                            <li><label><input type="checkbox"><svg><use href="#chip"/></svg><span>C8</span></label></li>
                            <li><label><input type="checkbox"><svg><use href="#chip"/></svg><span>C9</span></label></li>
                            <li class="selected"><label><input type="checkbox" checked><svg><use href="#chip"/></svg><span>C10</span></label></li>
                            <li><label><input type="checkbox"><svg><use href="#chip"/></svg><span>C11</span></label></li>
                            <li><label><input type="checkbox"><svg><use href="#chip"/></svg><span>C12</span></label></li>
                            <li><label><input type="checkbox"><svg><use href="#chip"/></svg><span>C13</span></label></li>
                            <li><label><input type="checkbox"><svg><use href="#chip"/></svg><span>C14</span></label></li>
                            <li><label><input type="checkbox"><svg><use href="#chip"/></svg><span>C15</span></label></li>
                            <li><label><input type="checkbox"><svg><use href="#chip"/></svg><span>C16</span></label></li>
                            <li><label><input type="checkbox"><svg><use href="#chip"/></svg><span>C17</span></label></li>
                            <li><label><input type="checkbox"><svg><use href="#chip"/></svg><span>CON2</span></label></li>
                            <li><label><input type="checkbox"><svg><use href="#chip"/></svg><span>CON3</span></label></li>
                            <li><label><input type="checkbox"><svg><use href="#chip"/></svg><span>D1</span></label></li>
                            <li><label><input type="checkbox"><svg><use href="#chip"/></svg><span>D2</span></label></li>
                            <li><label><input type="checkbox"><svg><use href="#chip"/></svg><span>DBG1</span></label></li>
                            <li><label><input type="checkbox"><svg><use href="#chip"/></svg><span>DBG2</span></label></li>
                            <li><label><input type="checkbox"><svg><use href="#chip"/></svg><span>F1</span></label></li>
                            <li><label><input type="checkbox"><svg><use href="#chip"/></svg><span>GND</span></label></li>
                            <li><label><input type="checkbox"><svg><use href="#chip"/></svg><span>GND1</span></label></li>
                            <li><label><input type="checkbox"><svg><use href="#chip"/></svg><span>GND2</span></label></li>
                            <li><label><input type="checkbox"><svg><use href="#chip"/></svg><span>LCM1</span></label></li>
                            <li><label><input type="checkbox"><svg><use href="#chip"/></svg><span>LCM2</span></label></li>
                            <li><label><input type="checkbox"><svg><use href="#chip"/></svg><span>P1</span></label></li>
                            <li><label><input type="checkbox"><svg><use href="#chip"/></svg><span>P2</span></label></li>
                            <li><label><input type="checkbox"><svg><use href="#chip"/></svg><span>R1</span></label></li>
                            <li><label><input type="checkbox"><svg><use href="#chip"/></svg><span>R2</span></label></li>
                            <li><label><input type="checkbox"><svg><use href="#chip"/></svg><span>R3</span></label></li>
                            <li><label><input type="checkbox"><svg><use href="#chip"/></svg><span>RST1</span></label></li>
                            <li><label><input type="checkbox"><svg><use href="#chip"/></svg><span>RST2</span></label></li>
                            <li><label><input type="checkbox"><svg><use href="#chip"/></svg><span>SW</span></label></li>
                            <li><label><input type="checkbox"><svg><use href="#chip"/></svg><span>SW1</span></label></li>
                            <li><label><input type="checkbox"><svg><use href="#chip"/></svg><span>U2</span></label></li>
                            <li><label><input type="checkbox"><svg><use href="#chip"/></svg><span>U3</span></label></li>
                            <li><label><input type="checkbox"><svg><use href="#chip"/></svg><span>VDD3V3</span></label></li>
                            <li><label><input type="checkbox"><svg><use href="#chip"/></svg><span>VDD5V</span></label></li>
                        </ul>
                    </div>
                </div>
                <div class="filters">
                    <fieldset>
                        <legend>Selection filters</legend>
                        <label class="spaced"><input type="radio" name="filter" checked>Match:</label>
                        <label><input type="radio" name="filter">Property:</label>
                        <p>Value</p>
                        <label><input type="radio" name="filter">Room:</label>
                        <label><input type="radio" name="filter">Part #:</label>
                        <label><input type="radio" name="filter">Net:</label>
                        <label><input type="radio" name="filter">Net group:</label>
                        <label><input type="radio" name="filter">Schematic page number:</label>
                        <label><input type="radio" name="filter">Place by refdes:</label>
                    </fieldset>
                    <fieldset class="quickview">
                        <legend>Quickview</legend>
                        <div class="preview"></div>
                        <label><input type="radio" name="view" checked>Graphics</label>
                    </fieldset>
                </div>
            </div>
            <div class="dialog-buttons">
                <button>Close</button>
                <button>Hide</button>
                <button class="apart">Cancel</button>
            </div>
        </div>
    </div>
</div>
</body>
</html>
```
FILE: styles.css
```css
* {
    box-sizing: border-box;
}
body {
    margin: 0;
    background: #fff;
    color: #000;
    font-family: "Liberation Sans", Arial, sans-serif;
    font-size: 11px;
}
button {
    margin: 0;
    padding: 0;
    border: 0;
    background: none;
    color: inherit;
    font: inherit;
}
h1, h2, p, ul {
    margin: 0;
    padding: 0;
    font-weight: normal;
}
.defs {
    position: absolute;
    width: 0;
    height: 0;
}
.desktop {
    position: relative;
    display: flex;
    flex-direction: column;
    height: calc(100vh - 144px);
    min-height: 900px;
    overflow: hidden;
}

/* title and menu */
header {
    background: #fff;
    border-bottom: 3px solid #c80000;
    font-family: "Open Sans", "Noto Sans", sans-serif;
    font-size: 12px;
}
.titlebar {
    display: flex;
    align-items: center;
    height: 23px;
    padding-left: 2px;
}
.app-icon {
    width: 16px;
    height: 16px;
    margin-right: 5px;
}
h1 {
    flex: 1;
    font-size: 12px;
    color: #999;
}
.window-controls {
    display: flex;
    align-self: flex-start;
    margin-right: 2px;
}
.window-controls button {
    width: 46px;
    height: 18px;
}
.window-controls svg {
    display: block;
    width: 12px;
    height: 12px;
    margin: 0 auto;
    fill: none;
    stroke: #999;
}
.menu-row {
    display: flex;
    justify-content: space-between;
    height: 20px;
}
nav {
    display: flex;
    gap: 1px;
}
nav button {
    padding: 0 8px;
    height: 20px;
    line-height: 20px;
}
.brand {
    padding-right: 1px;
    font: bold 17px/15px "Noto Sans", sans-serif;
    color: #222;
    white-space: nowrap;
}
.macron {
    position: relative;
}
.macron::before {
    content: "";
    position: absolute;
    top: 5px;
    left: 2px;
    width: 6px;
    height: 1px;
    background: #e02020;
}

/* toolbars */
.toolbar {
    display: flex;
    height: 34px;
    background: #f0f0f0;
    border-bottom: 1px solid #b4b4b4;
}
.toolbar .group {
    position: relative;
    display: flex;
    align-items: center;
    padding: 0 2px 0 9px;
    border-right: 1px solid #b4b4b4;
    box-shadow: inset 1px 1px #fff;
}
.group.last {
    flex: 1;
}
.toolbar .group::before {
    content: "";
    position: absolute;
    left: 4px;
    top: 4px;
    bottom: 4px;
    width: 2px;
    background: repeating-linear-gradient(#b4b4b4 0 2px, transparent 2px 4px);
}
.toolbar button {
    width: 31px;
    height: 29px;
}
.toolbar .drop {
    width: 12px;
}
.toolbar .on {
    background: #c2dcf3;
    border: 1px solid #90c8f6;
}
.toolbar svg, .side-toolbar svg {
    display: block;
    width: 24px;
    height: 24px;
    margin: 0 auto;
    overflow: visible;
    fill: none;
    filter: drop-shadow(0 1px 1px rgba(0, 0, 0, 0.35));
}
.toolbar .drop svg {
    width: 12px;
    height: 12px;
    filter: none;
}
svg text {
    font-family: "Liberation Sans", Arial, sans-serif;
    font-weight: bold;
    text-anchor: middle;
    stroke: none;
}
svg .t-3d {
    font-size: 19px;
    text-anchor: start;
    fill: #8cbfe6;
    stroke: #4a86b8;
}
svg .t-flip {
    font-size: 7px;
    fill: #fff;
}
svg .t-cm {
    font-size: 8px;
    fill: #fff;
}
svg .t-123 {
    font-size: 10px;
    fill: #555;
}
svg .t-odb {
    font-size: 8px;
    fill: #fff;
}
svg .t-ref {
    font-size: 7px;
    fill: #000;
}
svg .t-tp {
    font-size: 7px;
    fill: #5c3408;
}
svg .t-help {
    font-size: 13px;
    fill: #2c477c;
}
svg .t-u1 {
    font-size: 8px;
    fill: #b02828;
}
svg .t-abc {
    font-size: 11px;
    font-weight: normal;
    fill: #666;
}
svg .t-skype {
    font-size: 17px;
    fill: #fff;
}

/* work area */
main {
    flex: 1;
    display: flex;
    min-height: 0;
    background: #f0f0f0;
}
.side-toolbar {
    width: 35px;
    border-right: 1px solid #b4b4b4;
    border-bottom: 1px solid #b4b4b4;
}
.side-toolbar .group {
    position: relative;
    padding: 10px 0 1px;
    border-bottom: 1px solid #b4b4b4;
    box-shadow: inset 0 1px #fff;
}
.side-toolbar .last {
    border-bottom: 0;
}
.side-toolbar .group::before {
    content: "";
    position: absolute;
    top: 4px;
    left: 4px;
    width: 26px;
    height: 2px;
    background: repeating-linear-gradient(90deg, #b4b4b4 0 2px, transparent 2px 4px);
}
.side-toolbar button {
    display: block;
    width: 34px;
    height: 30px;
}
.editor {
    flex: 1;
    display: flex;
    flex-direction: column;
    padding: 9px 6px 0 2px;
}
.canvas {
    flex: 1;
    display: block;
    width: auto;
    min-height: 0;
    margin: 0 2px 0 7px;
    background: #000;
}
.command-title {
    display: flex;
    align-items: center;
    gap: 4px;
    height: 35px;
    padding: 10px 0 0 13px;
    font: 12px/24px "Liberation Serif", "Times New Roman", serif;
}
.command-title::after {
    content: "";
    flex: 1;
    height: 4px;
    background: #b8b8b8;
}
.console-row {
    display: flex;
}
.console {
    flex: 1;
    margin: 0;
    padding: 2px 1px;
    border: 1px solid #696969;
    background: #fff;
    font: 11px/13px "Liberation Sans", Arial, sans-serif;
}
.scroll {
    display: flex;
    align-items: flex-end;
    width: 25px;
}
.scroll svg {
    width: 12px;
    height: 12px;
    margin: 0 2px 6px;
}
.worldview {
    width: 420px;
    border: 3px double #777;
    background: #000;
}
.options {
    width: 333px;
    margin-top: 2px;
    border: 1px solid #828790;
    border-top-color: #c4c4c4;
}

/* status bar */
.statusbar {
    display: flex;
    padding: 3px 0 2px;
    background: #f0f0f0;
    font: 12px/24px "Liberation Serif", "Times New Roman", serif;
}
.cell {
    display: flex;
    width: 169px;
    height: 24px;
    padding-left: 4px;
    border-right: 1px solid #d4d4d4;
    white-space: nowrap;
}
.cell.wide {
    width: 170px;
}
.cell.first {
    width: 168px;
    padding-left: 2px;
}
.cell.key {
    width: 29px;
    padding: 2px 0 0 5px;
}
.cell.key button {
    width: 21px;
    height: 21px;
    border: 1px solid #adadad;
    background: #e1e1e1;
    line-height: 19px;
}
.cell.rest {
    flex: 1;
    border: 0;
}
.light {
    flex: 1;
    margin-right: 1px;
    background: #0f0;
}

/* taskbar */
.taskbar {
    display: flex;
    height: 40px;
    background: #000;
}
.taskbar button {
    position: relative;
    width: 49px;
    height: 40px;
}
.taskbar .sys {
    width: 48px;
}
.taskbar button svg {
    display: block;
    width: 22px;
    height: 22px;
    margin: 0 auto;
}
.taskbar .open::after {
    content: "";
    position: absolute;
    left: 5px;
    right: 4px;
    bottom: 0;
    height: 2px;
    background: #76b9ed;
}
.tray {
    display: flex;
    align-items: center;
    margin-left: auto;
    margin-right: 3px;
    padding-right: 10px;
    border-right: 1px solid #555;
}
.tray svg {
    width: 24px;
    height: 24px;
}
.clock {
    padding: 0 0 2px 6px;
    color: #fff;
    font: 12px/17px "Open Sans", "Noto Sans CJK TC", sans-serif;
    text-align: center;
}

/* placement dialog */
.dialog {
    position: absolute;
    top: 119px;
    left: 936px;
    right: -180px;
    bottom: 78px;
    display: flex;
    flex-direction: column;
    border: 1px solid #1883d7;
    background: #f0f0f0;
    box-shadow: 0 4px 16px rgba(0, 0, 0, 0.4);
}
.dialog-title {
    display: flex;
    align-items: center;
    gap: 5px;
    height: 30px;
    padding: 0 8px 2px;
    background: #fff;
    color: #444;
    font-family: "Open Sans", "Noto Sans", sans-serif;
}
.dialog-title svg {
    width: 16px;
    height: 16px;
}
.dialog-title h2 {
    font-size: 12px;
}
.dialog-body {
    flex: 1;
    display: flex;
    flex-direction: column;
    min-height: 0;
    padding: 11px 7px 6px;
}
.tabs {
    display: flex;
    align-items: flex-end;
}
.tabs button {
    height: 18px;
    padding: 0 3px;
    border: 1px solid #d9d9d9;
    border-width: 1px 1px 0 0;
}
.tabs .active {
    height: 20px;
    padding: 0 4px 1px 7px;
    border-left-width: 1px;
    background: #fff;
}
.page {
    flex: 1;
    display: flex;
    gap: 8px;
    min-height: 0;
    padding: 11px 8px 0;
    border: 1px solid #d9d9d9;
    box-shadow: inset 1px 3px #fff;
}
.tree-column {
    flex: 1;
    display: flex;
    flex-direction: column;
    min-height: 0;
}
select {
    width: 185px;
    height: 21px;
    margin: 3px 0 2px;
    padding: 0 3px;
    appearance: none;
    border: 1px solid #adadad;
    border-radius: 0;
    background: #e1e1e1 url("data:image/svg+xml,%3Csvg xmlns='http://www.w3.org/2000/svg' width='10' height='6'%3E%3Cpath d='M1 1l4 4 4-4' fill='none' stroke='%23444'/%3E%3C/svg%3E") no-repeat right 4px center;
    color: #000;
    font: inherit;
}
.tree {
    flex: 1;
    min-height: 0;
    padding: 1px 0 0 1px;
    overflow: hidden;
    border: 1px solid #828790;
    border-bottom: 0;
    background: #fff;
    box-shadow: inset 1px 1px #fff, inset 2px 2px #696969, inset -2px 0 #e3e3e3;
}
.root {
    display: flex;
    align-items: center;
    height: 16px;
    padding-left: 8px;
}
.expander {
    position: relative;
    width: 9px;
    height: 9px;
    border: 1px solid #919191;
    background: #f4f4f4;
}
.expander::after {
    content: "";
    position: absolute;
    top: 3px;
    left: 1px;
    width: 5px;
    height: 1px;
    background: #3b5fa8;
}
.link {
    width: 6px;
    margin: 0 2px 0 1px;
    border-top: 1px dotted #808080;
}
.folder {
    width: 16px;
    height: 12px;
    margin: 0 5px 0 2px;
}
.tree ul {
    margin-left: 31px;
    list-style: none;
    background: repeating-linear-gradient(#808080 0 1px, transparent 1px 2px) 0 0 / 1px calc(100% - 8px) no-repeat;
}
.tree li {
    display: flex;
    align-items: center;
    height: 16px;
}
.tree li::before {
    content: "";
    width: 12px;
    margin-right: 2px;
    border-top: 1px dotted #808080;
}
.tree li label {
    display: flex;
    align-items: center;
}
.tree li svg {
    width: 12px;
    height: 12px;
    margin: 0 4px 0 5px;
}
.tree li span {
    padding: 0 2px;
    line-height: 16px;
}
.selected span {
    background: #39f;
    color: #fff;
}
input[type="checkbox"] {
    position: relative;
    width: 11px;
    height: 11px;
    margin: 0;
    appearance: none;
    border: 1px solid #808080;
    background: #fff;
}
input[type="checkbox"]:checked::before {
    content: "";
    position: absolute;
    inset: 1px;
    background: #000;
    clip-path: polygon(0 30%, 35% 60%, 100% 0, 100% 35%, 35% 100%, 0 70%);
}
.filters {
    width: 246px;
}
fieldset {
    height: 218px;
    margin: 0 0 13px;
    padding: 1px 0 0 6px;
    border: 1px solid #dcdcdc;
}
legend {
    padding: 0 2px;
    line-height: 12px;
}
fieldset label {
    display: flex;
    align-items: center;
    gap: 4px;
    height: 22px;
}
.spaced {
    margin-bottom: 11px;
}
fieldset p {
    padding-left: 14px;
    line-height: 22px;
}
input[type="radio"] {
    width: 13px;
    height: 13px;
    margin: 0;
    appearance: none;
    border: 1px solid #444;
    border-radius: 50%;
    background: #fff;
}
input[type="radio"]:checked {
    background: radial-gradient(circle, #333 3px, #fff 4px);
}
.quickview {
    height: 134px;
}
.preview, .quickview label {
    margin-left: 35px;
}
.preview {
    width: 140px;
    height: 98px;
    border: 1px solid #696969;
}
.dialog-buttons {
    display: flex;
    gap: 23px;
    padding: 13px 0 0 8px;
}
.dialog-buttons button {
    width: 68px;
    height: 20px;
    border: 1px solid #adadad;
    background: #e1e1e1;
}
.dialog-buttons .apart {
    margin-left: 70px;
}
```
